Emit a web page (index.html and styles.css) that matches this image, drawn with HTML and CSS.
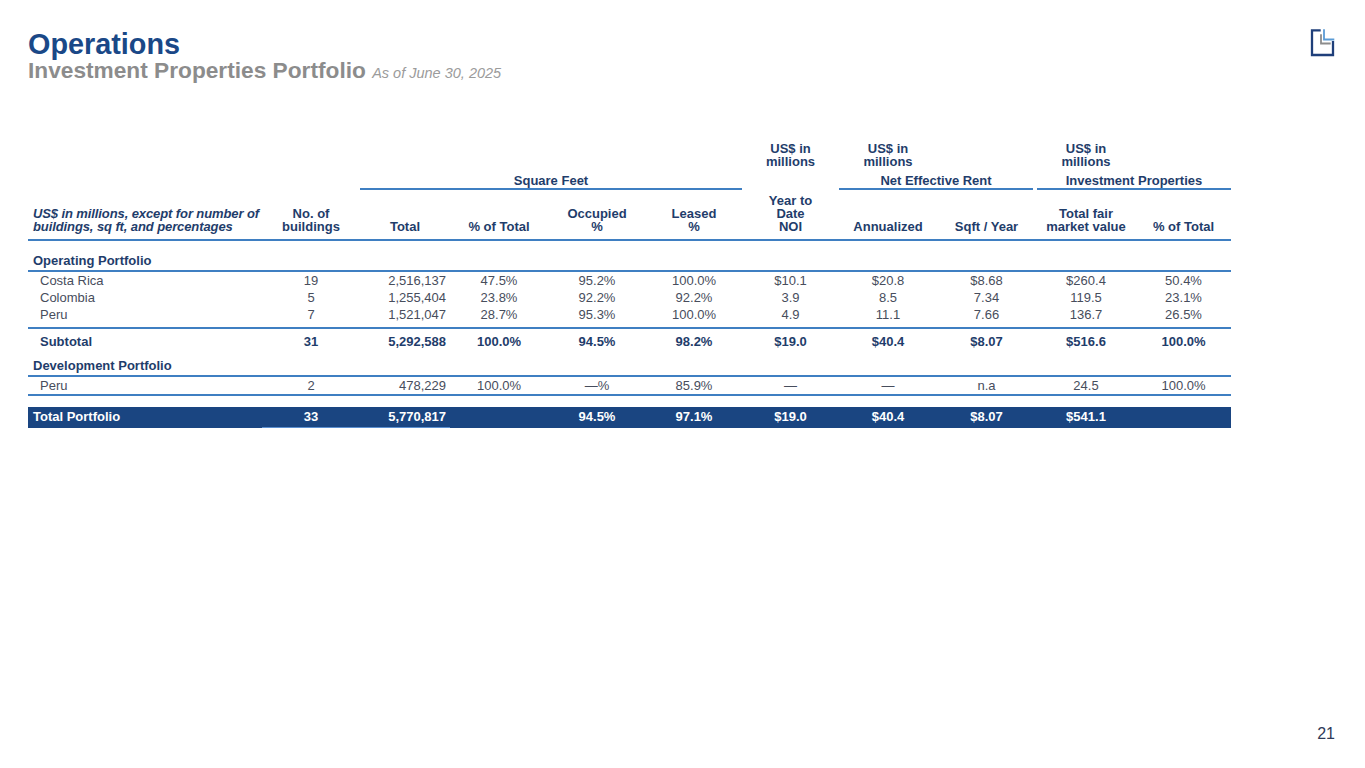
FILE: index.html
```html
<!DOCTYPE html>
<html lang="en">
<head>
<meta charset="utf-8">
<title>Operations - Investment Properties Portfolio</title>
<link rel="stylesheet" href="styles.css">
</head>
<body>
<div class="slide">
  <header class="top">
    <div class="titles">
      <h1 class="title">Operations</h1>
      <h2 class="subtitle">Investment Properties Portfolio <span class="asof">As of June 30, 2025</span></h2>
    </div>
    <svg class="logo" viewBox="0 0 32 34" aria-hidden="true">
      <path d="M14.7 4.3 H6 V29 H27 V15" fill="none" stroke="#1f3f7a" stroke-width="2.3"/>
      <path d="M18 3.3 V13.5 H28.3" fill="none" stroke="#5b9bd5" stroke-width="1.8"/>
      <path d="M15 8.3 V17.5 H24.7" fill="none" stroke="#8c8c8c" stroke-width="1.8"/>
    </svg>
  </header>

  <table class="ops">
    <colgroup>
      <col style="width:234px"><col style="width:98px"><col style="width:90px"><col style="width:98px">
      <col style="width:98px"><col style="width:96px"><col style="width:97px"><col style="width:98px">
      <col style="width:99px"><col style="width:100px"><col style="width:95px">
    </colgroup>
    <thead>
      <tr class="units">
        <td colspan="6"></td>
        <td>US$ in<br>millions</td>
        <td>US$ in<br>millions</td>
        <td></td>
        <td>US$ in<br>millions</td>
        <td></td>
      </tr>
      <tr class="groups">
        <td colspan="2"></td>
        <td colspan="4"><div class="grp">Square Feet</div></td>
        <td></td>
        <td colspan="2"><div class="grp grp-ner">Net Effective Rent</div></td>
        <td colspan="2"><div class="grp grp-ip">Investment Properties</div></td>
      </tr>
      <tr class="heads">
        <td class="hlbl">US$ in millions, except for number of<br>buildings, sq ft, and percentages</td>
        <td>No. of<br>buildings</td>
        <td>Total</td>
        <td>% of Total</td>
        <td>Occupied<br>%</td>
        <td>Leased<br>%</td>
        <td>Year to<br>Date<br>NOI</td>
        <td>Annualized</td>
        <td>Sqft / Year</td>
        <td>Total fair<br>market value</td>
        <td>% of Total</td>
      </tr>
    </thead>
    <tbody>
      <tr class="sec"><td colspan="11">Operating Portfolio</td></tr>
      <tr class="row">
        <td class="lbl">Costa Rica</td><td>19</td><td class="num">2,516,137</td><td>47.5%</td><td>95.2%</td><td>100.0%</td><td>$10.1</td><td>$20.8</td><td>$8.68</td><td>$260.4</td><td>50.4%</td>
      </tr>
      <tr class="row">
        <td class="lbl">Colombia</td><td>5</td><td class="num">1,255,404</td><td>23.8%</td><td>92.2%</td><td>92.2%</td><td>3.9</td><td>8.5</td><td>7.34</td><td>119.5</td><td>23.1%</td>
      </tr>
      <tr class="row last">
        <td class="lbl">Peru</td><td>7</td><td class="num">1,521,047</td><td>28.7%</td><td>95.3%</td><td>100.0%</td><td>4.9</td><td>11.1</td><td>7.66</td><td>136.7</td><td>26.5%</td>
      </tr>
      <tr class="sub">
        <td class="lbl">Subtotal</td><td>31</td><td class="num">5,292,588</td><td>100.0%</td><td>94.5%</td><td>98.2%</td><td>$19.0</td><td>$40.4</td><td>$8.07</td><td>$516.6</td><td>100.0%</td>
      </tr>
      <tr class="sec dev"><td colspan="11">Development Portfolio</td></tr>
      <tr class="row ruled">
        <td class="lbl">Peru</td><td>2</td><td class="num">478,229</td><td>100.0%</td><td>—%</td><td>85.9%</td><td>—</td><td>—</td><td>n.a</td><td>24.5</td><td>100.0%</td>
      </tr>
      <tr class="spacer"><td colspan="11"></td></tr>
      <tr class="tot">
        <td class="tlbl">Total Portfolio</td><td class="hl">33</td><td class="num hl">5,770,817</td><td></td><td>94.5%</td><td>97.1%</td><td>$19.0</td><td>$40.4</td><td>$8.07</td><td>$541.1</td><td></td>
      </tr>
    </tbody>
  </table>

  <footer class="foot">21</footer>
</div>
</body>
</html>
```

FILE: styles.css
```css
* { box-sizing: border-box; }

html, body {
  margin: 0;
  padding: 0;
  background: #ffffff;
}

body {
  font-family: "Liberation Sans", Arial, sans-serif;
}

.slide {
  width: 1365px;
  height: 768px;
  display: flex;
  flex-direction: column;
  padding: 26px 27px 0 28px;
  overflow: hidden;
}

/* ---------- header ---------- */
.top {
  display: flex;
  justify-content: space-between;
  align-items: flex-start;
}

.titles {
  margin-top: 4px;
}

.title {
  margin: 0;
  font-size: 28.8px;
  line-height: 28px;
  font-weight: 700;
  color: #1a4887;
}

.subtitle {
  margin: 0;
  font-size: 22.7px;
  line-height: 24px;
  font-weight: 700;
  color: #8c8c8c;
}

.asof {
  font-size: 14.5px;
  line-height: 1;
  font-weight: 400;
  font-style: italic;
  color: #9b9b9b;
}

.logo {
  display: block;
  width: 32px;
  height: 34px;
}

/* ---------- table ---------- */
.ops {
  margin-top: 60px;
  width: 1203px;
  table-layout: fixed;
  border-collapse: separate;
  border-spacing: 0;
  font-size: 13px;
  color: #474d5c;
}

.ops td {
  padding: 0;
  text-align: center;
  white-space: nowrap;
}

.units td {
  line-height: 13px;
  font-weight: 700;
  color: #1f3d6b;
  vertical-align: top;
}

.groups td {
  padding-top: 6px;
  vertical-align: bottom;
}

.grp {
  line-height: 13px;
  padding-bottom: 1px;
  border-bottom: 2px solid #3f7fc2;
  font-weight: 700;
  color: #1f3d6b;
}

.grp-ner { margin-right: 3px; }
.grp-ip { margin-left: 1px; }

.heads td {
  padding: 4px 0 6px;
  line-height: 13px;
  font-weight: 700;
  color: #1f3d6b;
  vertical-align: bottom;
  border-bottom: 2px solid #3f7fc2;
}

.heads td.hlbl {
  text-align: left;
  padding-left: 5px;
  font-style: italic;
  letter-spacing: -0.1px;
}

.ops tbody td {
  line-height: 17px;
}

.ops td.lbl {
  text-align: left;
  padding-left: 12px;
}

.ops td.num {
  text-align: right;
  padding-right: 4px;
}

.ops .sec td {
  text-align: left;
  padding: 11px 0 1px 5px;
  font-weight: 700;
  color: #1f3d6b;
  border-bottom: 2px solid #3f7fc2;
}

.ops .sec.dev td {
  padding-top: 7px;
}

.ops .row.last td {
  padding-bottom: 4px;
  border-bottom: 2px solid #3f7fc2;
}

.ops .row.ruled td {
  border-bottom: 2px solid #3f7fc2;
}

.ops .sub td {
  padding-top: 4px;
  font-weight: 700;
  color: #1f3d6b;
}

.ops .spacer td {
  height: 11px;
  line-height: 11px;
}

.ops .tot td {
  background: #1a4581;
  color: #ffffff;
  font-weight: 700;
  line-height: 20px;
  border-bottom: 1px solid #1a4581;
}

.ops .tot td.tlbl {
  text-align: left;
  padding-left: 5px;
}

.ops .tot td.hl {
  border-bottom-color: #5b8fd0;
}

/* ---------- footer ---------- */
.foot {
  margin-top: auto;
  padding: 0 3px 26px 0;
  text-align: right;
  font-size: 16px;
  line-height: 16px;
  color: #2e3a59;
}
```
